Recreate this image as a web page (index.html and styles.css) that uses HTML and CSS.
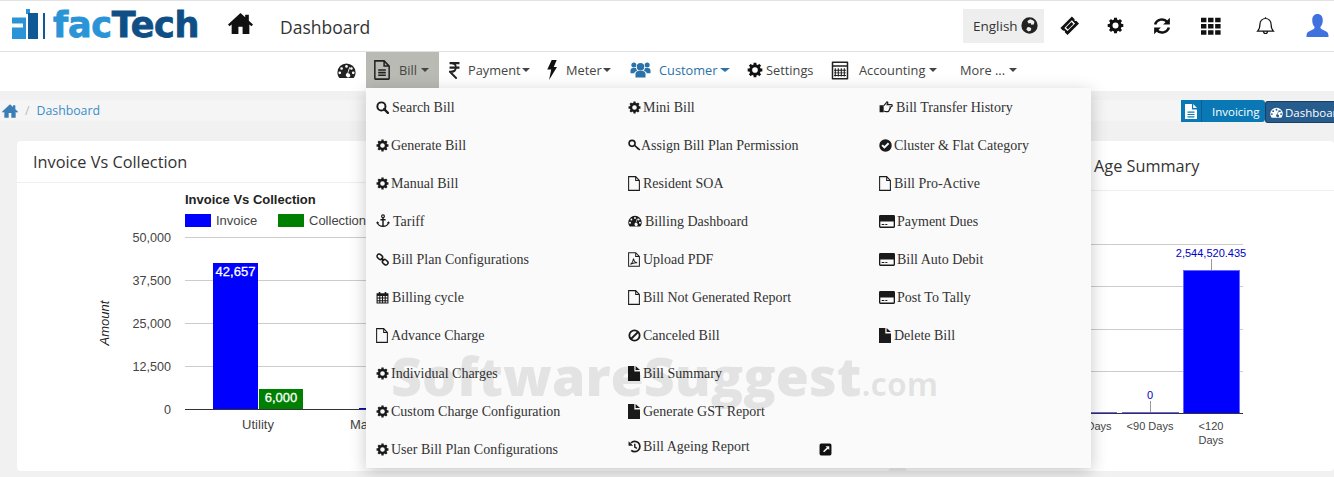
FILE: index.html
```html
<!DOCTYPE html>
<html lang="en">
<head>
<meta charset="utf-8">
<title>facTech Dashboard</title>
<link rel="stylesheet" href="styles.css">
</head>
<body>
<svg class="sprite" aria-hidden="true">
  <symbol id="i-home" viewBox="0 0 24 24"><path d="M12 2 0 13l1.500 1.700L3.500 13v9h6.500v-7h4v7h6.500v-9l2 1.700L24 13l-4-3.700V3.500h-3.500v2.600z"/></symbol>
  <symbol id="i-gear" viewBox="0 0 24 24"><circle cx="12" cy="12" r="6.500" fill="none" stroke="currentColor" stroke-width="4.500"/><path d="M12 1v5M12 18v5M1 12h5M18 12h5M4.200 4.200l3.500 3.500M16.300 16.300l3.500 3.500M4.200 19.800l3.500-3.500M16.300 7.700l3.500-3.500" stroke="currentColor" stroke-width="4.200"/></symbol>
  <symbol id="i-gauge" viewBox="0 0 24 24"><path fill-rule="evenodd" d="M12 3a11.500 11.500 0 0 0-11.500 11.500c0 2.700 1 5.200 2.600 7h17.800c1.600-1.800 2.600-4.300 2.600-7A11.500 11.500 0 0 0 12 3zM12 5.200a1.700 1.700 0 1 1 0 3.400 1.700 1.700 0 0 1 0-3.400zM5.800 7.800a1.700 1.700 0 1 1 0 3.400 1.700 1.700 0 0 1 0-3.400zM18.200 7.800a1.700 1.700 0 1 1 0 3.400 1.700 1.700 0 0 1 0-3.400zM3.500 13.200a1.700 1.700 0 1 1 0 3.400 1.700 1.700 0 0 1 0-3.400zM20.500 13.200a1.700 1.700 0 1 1 0 3.400 1.700 1.700 0 0 1 0-3.400zM15.400 7.800l1.200.4-2.600 7.400a2.600 2.600 0 1 1-2 4 2.600 2.600 0 0 1 1.200-4.500z"/></symbol>
  <symbol id="i-filetext" viewBox="3 .5 19 23" preserveAspectRatio="none"><path fill="none" stroke="currentColor" stroke-width="1.800" d="M4 1.500h11l6 6v14.200a.8.800 0 0 1-.8.800H4.800a.8.800 0 0 1-.8-.8zM15 1.500v6h6M8 12h9M8 15h9M8 18h9"/></symbol>
  <symbol id="i-fileo" viewBox="2.500 .5 19.500 23" preserveAspectRatio="none"><path fill="none" stroke="currentColor" stroke-width="1.700" d="M3.500 1.500H15l6 6v15H3.500zM15 1.500v6h6"/></symbol>
  <symbol id="i-file" viewBox="3 1 19 22" preserveAspectRatio="none"><path d="M3 1h10v8h9v14H3zM15 1l7 6h-7z"/></symbol>
  <symbol id="i-filesolidtext" viewBox="3 1 19 22" preserveAspectRatio="none"><path fill-rule="evenodd" d="M3 1h11v8h8v14H3zM16 1l6 6h-6zM7 12v1.800h11V12zM7 15.500v1.800h11v-1.800zM7 19v1.800h11V19z"/></symbol>
  <symbol id="i-pdf" viewBox="2.500 .5 19.500 23" preserveAspectRatio="none"><path fill="none" stroke="currentColor" stroke-width="1.600" d="M3.500 1.500H15l6 6v15H3.500zM15 1.500v6h6M6.500 19.500c3-2 4.500-5 5-9 .5 4 2.500 6 6 6.500-3.500-.5-8 .5-11 2.500z"/></symbol>
  <symbol id="i-bolt" viewBox="4 0 17 24" preserveAspectRatio="none"><path d="M12 0h8.500l-5 8.500H21L7.500 24l3.700-12.500H4.500z"/></symbol>
  <symbol id="i-users" viewBox="0 0 24 24"><circle cx="12" cy="8" r="4.500"/><circle cx="4" cy="6" r="3"/><circle cx="20" cy="6" r="3"/><path d="M6 21v-5a4 4 0 0 1 4-3h4a4 4 0 0 1 4 3v5zM0 16v-4a3 3 0 0 1 3-2.500h3.500a6 6 0 0 0 1.500 3C6 13.500 4.800 14.500 4.500 16zM24 16v-4a3 3 0 0 0-3-2.500h-3.500a6 6 0 0 1-1.500 3c2 1 3.200 2 3.500 3.500z"/></symbol>
  <symbol id="i-calc" viewBox="0 0 24 24"><path fill-rule="evenodd" d="M2 0h20a1 1 0 0 1 1 1v22a1 1 0 0 1-1 1H2a1 1 0 0 1-1-1V1a1 1 0 0 1 1-1zM3 2v3h18V2zM3 7v15h18V7z"/><path d="M5 9h1.500v11H5zM9 9h1.500v11H9zM13 9h1.500v11H13zM17 9h1.500v11H17zM4 11h16v1.200H4zM4 14.500h16v1.200H4zM4 18h16v1.200H4z"/></symbol>
  <symbol id="i-search" viewBox="0 0 24 24"><circle cx="10" cy="10" r="7.500" fill="none" stroke="currentColor" stroke-width="3.600"/><path d="m15 15 7 7" stroke="currentColor" stroke-width="4.200" stroke-linecap="round"/></symbol>
  <symbol id="i-anchor" viewBox="0 0 24 24"><circle cx="12" cy="4" r="2.400" fill="none" stroke="currentColor" stroke-width="2"/><path fill="none" stroke="currentColor" stroke-width="2.500" d="M12 6.500V22M7.500 10h9M2.500 14c0 4.500 5 7 9.500 7s9.500-2.500 9.500-7"/><path d="m0 16 2.500-3.500L5.500 16zM18.500 16l3-3.500L24 16z"/></symbol>
  <symbol id="i-link" viewBox="0 0 24 24"><g fill="none" stroke="currentColor" stroke-width="2.800"><rect x="1.500" y="3" width="11" height="8" rx="4" transform="rotate(40 7 7)"/><rect x="11.500" y="13" width="11" height="8" rx="4" transform="rotate(40 17 17)"/><path d="m9.500 9.500 5 5"/></g></symbol>
  <symbol id="i-cal" viewBox="0 0 24 24"><path fill-rule="evenodd" d="M1 4h4V2h3v2h8V2h3v2h4v19H1zM3 9v3h3V9zM8 9v3h3V9zM13 9v3h3V9zM18 9v3h3V9zM3 14v3h3v-3zM8 14v3h3v-3zM13 14v3h3v-3zM18 14v3h3v-3zM3 19v2h3v-2zM8 19v2h3v-2zM13 19v2h3v-2zM18 19v2h3v-2z"/></symbol>
  <symbol id="i-key" viewBox="0 0 24 24"><circle cx="7.500" cy="8" r="5.500" fill="none" stroke="currentColor" stroke-width="3"/><path d="m12 11.500 8 7.500" stroke="currentColor" stroke-width="3"/><path d="m17 18 2-2M20 20.500l2-2" stroke="currentColor" stroke-width="2.500"/></symbol>
  <symbol id="i-ban" viewBox="0 0 24 24"><circle cx="12" cy="12" r="9.500" fill="none" stroke="currentColor" stroke-width="3.400"/><path d="m5.500 18.500 13-13" stroke="currentColor" stroke-width="3.400"/></symbol>
  <symbol id="i-history" viewBox="0 0 24 24"><path fill="none" stroke="currentColor" stroke-width="3.200" d="M5.500 5.500A9.500 9.500 0 1 1 6 19"/><path d="M1 2.500 9.500 10.500H1z"/><path fill="none" stroke="currentColor" stroke-width="2.600" d="M12.500 7v6l4 2.500"/></symbol>
  <symbol id="i-thumb" viewBox="0 0 24 24"><path d="M1 9h7v12H1z"/><path fill="none" stroke="currentColor" stroke-width="2" d="M8 10c1-2 3-3 5-6 1-2 3 0 2 2l-1 2h7c2 0 2.500 3 0 3.500l-2 .5c1 1 .5 2.500-.7 3 .5 1.200-.3 2.500-1.300 2.700.3 1.200-.5 2.300-1.500 2.300H12c-2 0-3-1-4-1"/></symbol>
  <symbol id="i-check" viewBox="0 0 24 24"><path fill-rule="evenodd" d="M12 .5a11.500 11.500 0 1 1 0 23 11.500 11.500 0 0 1 0-23zM10 18l9-9-2.500-2.500-6.500 6.500-3-3L4.500 12.500z"/></symbol>
  <symbol id="i-card" viewBox="0 3 24 18" preserveAspectRatio="none"><path fill-rule="evenodd" d="M2 3h20a2 2 0 0 1 2 2v14a2 2 0 0 1-2 2H2a2 2 0 0 1-2-2V5a2 2 0 0 1 2-2zM2 12v7h20v-7zM4 15.500h4v1.500H4zM9.500 15.500h3v1.500h-3z"/></symbol>
  <symbol id="i-ext" viewBox="0 0 24 24"><path fill-rule="evenodd" d="M4 1h16a3 3 0 0 1 3 3v16a3 3 0 0 1-3 3H4a3 3 0 0 1-3-3V4a3 3 0 0 1 3-3zM12 6l2.500 2.500-7 6.500 2 2 7-6.500L19 13V6z"/></symbol>
  <symbol id="i-globe" viewBox="0 0 24 24"><path fill-rule="evenodd" d="M12 .5a11.500 11.500 0 1 1 0 23 11.500 11.500 0 0 1 0-23zM13 3c-2 .5-3 2-4 3l1.500 3 3-.5 1 2.500 3.500-.5 1-3.500C18 5 16 3.500 13 3zM9 14.500l-1.500 3 3 3 3.500-1.500 .5-3-3-2z"/></symbol>
  <symbol id="i-ticket" viewBox="0 0 24 24"><path fill-rule="evenodd" d="M15 .5l3.500 3.500c-.8 1.500.5 3 2 2L24 9.500 9.500 24 6 20.500c.8-1.500-.5-3-2-2L.5 15zM15 5.500 5.500 15l4 4L19 9.500z"/><path d="m14.500 7.500 2.500 2.500-7 7L7.500 14.500z"/></symbol>
  <symbol id="i-refresh" viewBox="0 0 24 24"><path fill="none" stroke="currentColor" stroke-width="3.400" d="M2.800 10A9.500 9.500 0 0 1 19 6.500M21.200 14A9.500 9.500 0 0 1 5 17.500"/><path d="M22.500 1v9h-9zM1.500 23v-9h9z"/></symbol>
  <symbol id="i-th" viewBox="0 0 24 24"><path d="M0 2h6.500v5.500H0zM8.500 2H15v5.500H8.500zM17 2h6.500v5.500H17zM0 9.500h6.500V15H0zM8.500 9.500H15V15H8.500zM17 9.500h6.500V15H17zM0 17h6.500v5.500H0zM8.500 17H15v5.500H8.500zM17 17h6.500v5.500H17z"/></symbol>
  <symbol id="i-bell" viewBox="0 0 24 24"><path fill="none" stroke="currentColor" stroke-width="1.500" d="M12 2.500a7 7 0 0 0-7 7c0 5-1.500 7.500-3 9h20c-1.500-1.500-3-4-3-9a7 7 0 0 0-7-7zM12 1v1.500M9.500 18.500a2.500 3 0 0 0 5 0"/></symbol>
  <symbol id="i-user" viewBox="0 0 24 24"><path d="M12 0c3.500 0 5.500 2.500 5.500 6.500 0 3-1 5.500-2.500 7l.5 2 6 3c1.500.8 2 2 2 5.500H.5c0-3.500.5-4.700 2-5.500l6-3 .5-2c-1.500-1.500-2.500-4-2.500-7C6.500 2.500 8.500 0 12 0z"/></symbol>
  <symbol id="i-rupee" viewBox="2 1.500 20 23" preserveAspectRatio="none"><path fill="none" stroke="currentColor" stroke-width="3" d="M3 3h18M3 9h18M6 3c5 0 8.500 1.500 8.500 6S11 15 4 15l12 9"/></symbol>
</svg>

<header class="topbar">
  <div class="logo">
    <svg class="logo-mark" viewBox="0 0 36 32"><path class="lm-light" d="M0 8.500h14V30H0V18.500h11v-4H0z"/><path class="lm-light" d="M14 0h4v5h-4z"/><path class="lm-dark" d="M16 4h10v26H16z"/><path class="lm-dark" d="M31 4h2v26h-2z"/></svg>
    <span class="logo-text"><span class="logo-fac">fac</span><span class="logo-tech">Tech</span></span>
  </div>
  <svg class="ic ic-home"><use href="#i-home"/></svg>
  <div class="page-title">Dashboard</div>
  <div class="top-actions">
    <div class="lang">English<svg class="ic ic-globe"><use href="#i-globe"/></svg></div>
    <svg class="ic ic-top ic-ticket"><use href="#i-ticket"/></svg>
    <svg class="ic ic-top ic-cog"><use href="#i-gear"/></svg>
    <svg class="ic ic-top ic-refresh"><use href="#i-refresh"/></svg>
    <svg class="ic ic-top ic-th"><use href="#i-th"/></svg>
    <svg class="ic ic-top ic-bell"><use href="#i-bell"/></svg>
    <svg class="ic ic-top ic-user"><use href="#i-user"/></svg>
  </div>
</header>

<nav class="navbar">
  <div class="nav-item nav-gauge"><svg class="ic nav-ic-gauge"><use href="#i-gauge"/></svg></div>
  <div class="nav-item nav-bill"><svg class="ic nav-ic-file"><use href="#i-filetext"/></svg><span>Bill</span><i class="caret caret-wide"></i></div>
  <div class="nav-item nav-pay"><svg class="ic nav-ic-rupee"><use href="#i-rupee"/></svg><span>Payment</span><i class="caret"></i></div>
  <div class="nav-item nav-meter"><svg class="ic nav-ic-bolt"><use href="#i-bolt"/></svg><span>Meter</span><i class="caret"></i></div>
  <div class="nav-item nav-cust"><svg class="ic nav-ic-users"><use href="#i-users"/></svg><span>Customer</span><i class="caret"></i></div>
  <div class="nav-item nav-set"><svg class="ic nav-ic-gear"><use href="#i-gear"/></svg><span>Settings</span></div>
  <div class="nav-item nav-acc"><svg class="ic nav-ic-calc"><use href="#i-calc"/></svg><span>Accounting</span><i class="caret caret-wide"></i></div>
  <div class="nav-item nav-more"><span>More ...</span><i class="caret caret-wide"></i></div>
</nav>

<div class="crumbs">
  <svg class="ic crumb-home"><use href="#i-home"/></svg>
  <span class="crumb-sep">/</span>
  <a class="crumb-link">Dashboard</a>
  <div class="crumb-btns">
    <div class="btn-inv"><span class="btn-inv-ic"><svg class="ic"><use href="#i-filesolidtext"/></svg></span><span class="btn-inv-label">Invoicing</span></div>
    <div class="btn-dash"><svg class="ic"><use href="#i-gauge"/></svg><span>Dashboard</span></div>
  </div>
</div>

<main class="cards">
  <section class="card card-left">
    <h2 class="card-title">Invoice Vs Collection</h2>
    <svg class="chart chart-left" viewBox="0 1 873 288">
      <text class="ch-title" x="168" y="22">Invoice Vs Collection</text>
      <rect class="fill-blue" x="168" y="32" width="26" height="13"/>
      <text class="ch-legend" x="199" y="43">Invoice</text>
      <rect class="fill-green" x="261" y="32" width="26" height="13"/>
      <text class="ch-legend" x="292" y="43">Collection</text>
      <path class="grid" d="M168 55.500h705M168 98.500h705M168 141.500h705M168 184.500h705"/>
      <text class="ch-tick" x="154" y="60">50,000</text>
      <text class="ch-tick" x="154" y="103">37,500</text>
      <text class="ch-tick" x="154" y="146">25,000</text>
      <text class="ch-tick" x="154" y="189">12,500</text>
      <text class="ch-tick" x="154" y="232">0</text>
      <text class="ch-axis" transform="translate(92 141) rotate(-90)">Amount</text>
      <rect class="fill-blue" x="196" y="81" width="45" height="146"/>
      <rect class="fill-green" x="242" y="207" width="44" height="20"/>
      <text class="ch-bar" x="218.500" y="94">42,657</text>
      <text class="ch-bar" x="264" y="220">6,000</text>
      <rect class="fill-blue" x="342" y="226" width="20" height="1"/>
      <path class="axis" d="M168 227.500h705"/>
      <text class="ch-cat" x="241" y="247">Utility</text>
      <text class="ch-cat ch-cat-start" x="333" y="247">Maintenance</text>
    </svg>
  </section>
  <section class="card card-right">
    <h2 class="card-title card-title-right">Age Summary</h2>
    <svg class="chart chart-right" viewBox="0 0 429 280">
      <path class="grid" d="M0 53.500h338M0 95.500h338M0 138.500h338M0 180.500h338"/>
      <rect class="bar-blue" x="278.500" y="79.500" width="56" height="143"/>
      <rect class="bar-blue" x="217.500" y="221.500" width="56" height="1"/>
      <rect class="bar-blue" x="155.500" y="221.500" width="56" height="1"/>
      <path class="leader" d="M306.500 68v11M245.500 210v11"/>
      <path class="axis" d="M0 222.500h338"/>
      <text class="ch-val" x="306" y="66">2,544,520.435</text>
      <text class="ch-val" x="245" y="208">0</text>
      <text class="ch-sm" x="194" y="239">Days</text>
      <text class="ch-sm" x="245" y="239">&lt;90 Days</text>
      <text class="ch-sm" x="306" y="239">&lt;120</text>
      <text class="ch-sm" x="306" y="253">Days</text>
    </svg>
  </section>
</main>

<div class="menu">
  <div class="menu-grid">
    <a class="mi mi-g4"><svg class="ic"><use href="#i-search"/></svg>Search Bill</a>
    <a class="mi mi-g2"><svg class="ic"><use href="#i-gear"/></svg>Generate Bill</a>
    <a class="mi mi-g2"><svg class="ic"><use href="#i-gear"/></svg>Manual Bill</a>
    <a class="mi mi-g5"><svg class="ic"><use href="#i-anchor"/></svg>Tariff</a>
    <a class="mi mi-g4"><svg class="ic"><use href="#i-link"/></svg>Bill Plan Configurations</a>
    <a class="mi mi-g4"><svg class="ic"><use href="#i-cal"/></svg>Billing cycle</a>
    <a class="mi"><svg class="ic ic-narrow"><use href="#i-fileo"/></svg>Advance Charge</a>
    <a class="mi mi-g2"><svg class="ic"><use href="#i-gear"/></svg>Individual Charges</a>
    <a class="mi mi-g2"><svg class="ic"><use href="#i-gear"/></svg>Custom Charge Configuration</a>
    <a class="mi mi-g2"><svg class="ic"><use href="#i-gear"/></svg>User Bill Plan Configurations</a>

    <a class="mi mi-g2"><svg class="ic"><use href="#i-gear"/></svg>Mini Bill</a>
    <a class="mi mi-g0"><svg class="ic"><use href="#i-key"/></svg>Assign Bill Plan Permission</a>
    <a class="mi"><svg class="ic ic-narrow"><use href="#i-fileo"/></svg>Resident SOA</a>
    <a class="mi mi-g5"><svg class="ic"><use href="#i-gauge"/></svg>Billing Dashboard</a>
    <a class="mi"><svg class="ic ic-narrow"><use href="#i-pdf"/></svg>Upload PDF</a>
    <a class="mi"><svg class="ic ic-narrow"><use href="#i-fileo"/></svg>Bill Not Generated Report</a>
    <a class="mi mi-g2"><svg class="ic"><use href="#i-ban"/></svg>Canceled Bill</a>
    <a class="mi"><svg class="ic ic-narrow"><use href="#i-file"/></svg>Bill Summary</a>
    <a class="mi"><svg class="ic ic-narrow"><use href="#i-file"/></svg>Generate GST Report</a>
    <a class="mi mi-g2 mi-up"><svg class="ic"><use href="#i-history"/></svg>Bill Ageing Report</a>

    <a class="mi mi-g5"><svg class="ic"><use href="#i-thumb"/></svg>Bill Transfer History</a>
    <a class="mi mi-g2"><svg class="ic"><use href="#i-check"/></svg>Cluster &amp; Flat Category</a>
    <a class="mi"><svg class="ic ic-narrow"><use href="#i-fileo"/></svg>Bill Pro-Active</a>
    <a class="mi mi-wide"><svg class="ic"><use href="#i-card"/></svg>Payment Dues</a>
    <a class="mi mi-wide"><svg class="ic"><use href="#i-card"/></svg>Bill Auto Debit</a>
    <a class="mi mi-wide"><svg class="ic"><use href="#i-card"/></svg>Post To Tally</a>
    <a class="mi"><svg class="ic ic-narrow"><use href="#i-file"/></svg>Delete Bill</a>
  </div>
  <svg class="ic menu-ext"><use href="#i-ext"/></svg>
</div>

<div class="watermark">SoftwareSuggest<span class="wm-com">.com</span></div>
</body>
</html>
```
FILE: styles.css
```css
* { box-sizing: border-box; }
html, body { margin: 0; padding: 0; }
body {
  width: 1334px;
  height: 477px;
  overflow: hidden;
  position: relative;
  background: #f1f1f1;
  font-family: "Open Sans", "Noto Sans", sans-serif;
  color: #333;
}
.sprite { display: none; }
.ic { display: block; fill: currentColor; flex: none; }

/* top bar */
.topbar {
  height: 52px;
  display: flex;
  align-items: center;
  background: #fff;
  border-top: 1px solid #e3e3e3;
  border-bottom: 1px solid #e0e0e0;
}
.logo { display: flex; align-items: center; margin-left: 12px; width: 216px; height: 32px; margin-bottom: 2px; }
.logo-mark { width: 36px; height: 32px; flex: none; }
.lm-light { fill: #2a94d6; }
.lm-dark { fill: #0f5a94; }
.logo-text { font-family: "DejaVu Sans", sans-serif; font-weight: 700; font-size: 35px; letter-spacing: -.3px; margin-left: 5px; line-height: 32px; -webkit-text-stroke: .8px currentColor; }
.logo-fac { color: #2a94d6; }
.logo-tech { color: #0f4f85; }
.ic-home { width: 25px; height: 25px; color: #111; margin-bottom: 5px; }
.page-title { margin-left: 27px; font-size: 17.500px; color: #333; margin-top: 2px; }
.top-actions { margin-left: auto; display: flex; align-items: center; height: 34px; margin-bottom: 1px; }
.lang {
  width: 81px; height: 34px; background: #eee; display: flex; align-items: center;
  padding-left: 10px; font-size: 13.500px; color: #333; gap: 3px;
}
.ic-globe { width: 17px; height: 17px; color: #222; }
.ic-top { color: #111; }
.ic-ticket { width: 19px; height: 19px; margin-left: 16px; }
.ic-cog { width: 17px; height: 17px; margin-left: 28px; }
.ic-refresh { width: 18px; height: 18px; margin-left: 29px; }
.ic-th { width: 22px; height: 20px; margin-left: 29px; }
.ic-bell { width: 19px; height: 20px; margin-left: 34px; }
.ic-user { width: 23px; height: 25px; margin-left: 31px; margin-right: 5px; color: #3f72de; }

/* nav */
.navbar {
  height: 39px;
  display: flex;
  align-items: flex-start;
  background: #fff;
  padding-left: 337px;
  font-size: 12.800px;
  color: #444;
}
.nav-item { display: flex; align-items: center; height: 36px; flex: none; }
.nav-gauge { width: 29px; }
.nav-ic-gauge { width: 19px; height: 19px; color: #222; }
.nav-bill { width: 73px; background: #b9bab3; padding-left: 8px; }
.nav-ic-file { width: 16px; height: 20px; color: #222; margin-right: 9px; }
.nav-pay { width: 100px; padding-left: 10px; }
.nav-ic-rupee { width: 11px; height: 17px; color: #222; margin-right: 8px; }
.nav-meter { width: 80px; padding-left: 8px; }
.nav-ic-bolt { width: 10px; height: 20px; color: #111; margin-right: 9px; }
.nav-cust { width: 128px; padding-left: 10px; color: #2a72a8; }
.nav-ic-users { width: 23px; height: 20px; margin-right: 7px; color: #2a72a8; }
.nav-set { width: 84px; }
.nav-ic-gear { width: 16px; height: 16px; color: #111; margin-right: 3px; }
.nav-acc { width: 129px; }
.nav-ic-calc { width: 18px; height: 19px; color: #222; margin-right: 10px; }
.caret { display: block; width: 0; height: 0; border: 4px solid transparent; border-top: 4px solid currentColor; border-bottom: 0; margin-left: 1px; }
.caret-wide { margin-left: 4px; }
.nav-cust .caret { border-width: 4px 5px 0; margin-left: 2px; }

/* breadcrumb */
.crumbs {
  margin-top: 9px;
  height: 21px;
  display: flex;
  align-items: center;
  background: #f5f5f5;
  font-size: 12.300px;
  padding-left: 2px;
}
.crumb-home { width: 16px; height: 16px; color: #3b7db5; }
.crumb-sep { margin-left: 7px; color: #bbb; }
.crumb-link { margin-left: 7px; color: #3b8ec9; }
.crumb-btns { margin-left: auto; display: flex; align-items: flex-start; height: 23px; align-self: flex-start; }
.btn-inv { display: flex; align-items: center; height: 22px; width: 84px; background: #0a78b4; color: #fff; border-radius: 0 3px 3px 0; font-size: 11.500px; }
.btn-inv-ic { width: 21px; height: 22px; display: flex; align-items: center; justify-content: center; border-right: 1px solid #0a5f90; }
.btn-inv-ic .ic { width: 12px; height: 15px; }
.btn-inv-label { margin-left: 10px; }
.btn-dash { display: flex; align-items: center; gap: 2px; margin-top: 1px; height: 22px; width: 69px; flex: none; padding-left: 4px; background: #265c8e; border: 1px solid #1a3f60; border-right: 0; border-radius: 3px 0 0 3px; color: #fff; font-size: 11.500px; white-space: nowrap; overflow: hidden; }
.btn-dash .ic { width: 13px; height: 13px; }

/* cards */
.cards { margin-top: 20px; margin-left: 17px; display: flex; gap: 15px; }
.card { background: #fff; border-radius: 4px; height: 330px; overflow: hidden; }
.card-left { width: 873px; }
.card-right { flex: 1; min-width: 429px; }
.card-title { margin: 0; font-weight: 400; font-size: 16.300px; color: #333; height: 42px; line-height: 42px; padding-left: 16px; border-bottom: 1px solid #eee; }
.card-title-right { height: 50px; line-height: 51px; padding-left: 189px; }
.chart { display: block; }
.chart-left { width: 873px; height: 288px; }
.chart-right { width: 429px; height: 280px; }
.grid { fill: none; stroke: #ccc; stroke-width: 1; }
.axis { fill: none; stroke: #333; stroke-width: 1; }
.leader { fill: none; stroke: #999; stroke-width: 1; }
.fill-blue { fill: #00f; }
.fill-green { fill: #008000; }
.bar-blue { fill: #00f; stroke: #6666ff; stroke-width: 1; }
.chart text { font-family: "Liberation Sans", Arial, sans-serif; }
.ch-title { font-size: 13px; font-weight: 700; fill: #222; }
.ch-legend { font-size: 13px; fill: #444; }
.ch-tick { font-size: 12.600px; fill: #444; text-anchor: end; }
.ch-axis { font-size: 13px; font-style: italic; fill: #222; text-anchor: middle; }
.ch-bar { font-size: 13px; fill: #fff; stroke: #fff; stroke-width: .3px; text-anchor: middle; }
.ch-cat { font-size: 13px; fill: #444; text-anchor: middle; }
.ch-cat-start { text-anchor: start; }
.ch-val { font-size: 11px; fill: #0000cc; text-anchor: middle; }
.ch-sm { font-size: 11px; fill: #444; text-anchor: middle; }

/* dropdown */
.menu {
  position: absolute;
  left: 366px;
  top: 88px;
  width: 725px;
  height: 380px;
  background: #fafafa;
  box-shadow: 0 4px 16px rgba(0, 0, 0, .22);
}
.menu-grid {
  display: grid;
  grid-auto-flow: column;
  grid-template-rows: repeat(10, 38px);
  grid-template-columns: 252px 251px 1fr;
  padding: 1px 0 0 10px;
}
.mi {
  display: flex;
  align-items: center;
  font-family: "Liberation Serif", "Times New Roman", serif;
  font-size: 14px;
  color: #333;
  white-space: nowrap;
}
.mi .ic { width: 13px; height: 13px; color: #1a1a1a; margin-bottom: 2px; }
.mi .ic-narrow { width: 12px; height: 15px; margin-right: 3px; }
.mi-wide .ic { width: 16px; height: 13px; margin-right: 2px; }
.mi-g0 .ic { margin-right: 0; }
.mi-g2 .ic { margin-right: 2px; }
.mi-g4 .ic { margin-right: 3px; }
.mi-g5 .ic { width: 14px; height: 14px; margin-right: 3px; }
.mi-up { margin-bottom: 6px; }
.menu-ext { position: absolute; left: 453px; top: 355px; width: 13px; height: 13px; color: #111; }

/* watermark */
.watermark {
  position: absolute;
  left: 391px;
  top: 342px;
  font-size: 53.700px;
  font-weight: 800;
  line-height: 68px;
  color: rgba(0, 0, 0, .09);
  white-space: nowrap;
  pointer-events: none;
}
.wm-com { font-size: 32px; font-weight: 700; }
```
